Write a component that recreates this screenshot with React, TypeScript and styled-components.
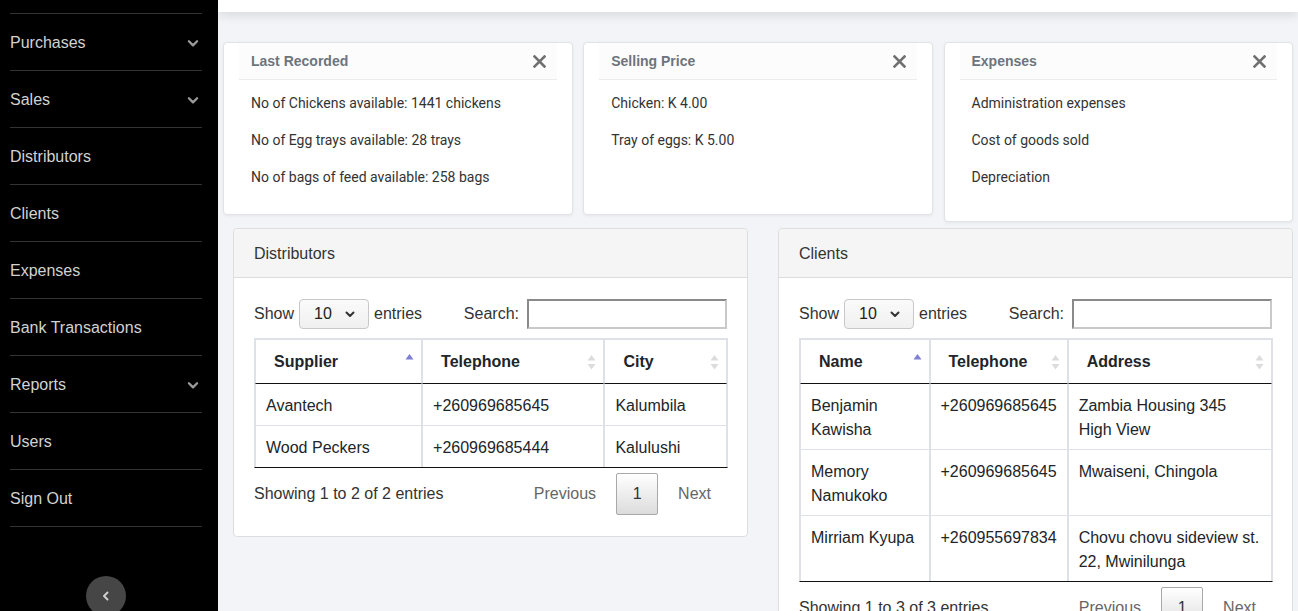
import React from "react";
import styled, { createGlobalStyle } from "styled-components";

const GlobalStyle = createGlobalStyle`
  html, body {
    margin: 0;
    padding: 0;
    height: 100%;
    overflow: hidden;
  }
  body {
    font-family: "Liberation Sans", Arial, sans-serif;
    color: #333;
  }
  * {
    box-sizing: border-box;
  }
`;

const Layout = styled.div`
  display: flex;
  width: 100vw;
  height: 100vh;
  overflow: hidden;
`;

const Sidebar = styled.aside`
  position: relative;
  width: 218px;
  flex-shrink: 0;
  background-color: #000;
  padding: 13px 16px 0 10px;
`;

const Menu = styled.ul`
  list-style: none;
  margin: 0;
  padding: 0;
  border-top: 1px solid #333;
`;

const MenuItem = styled.li`
  display: flex;
  align-items: center;
  justify-content: space-between;
  height: 57px;
  padding: 2px 2px 0 0;
  border-bottom: 1px solid #333;
  color: #d2d2d2;
  font-size: 16px;
`;

const CollapseButton = styled.button`
  position: absolute;
  left: 86px;
  top: 576px;
  width: 40px;
  height: 40px;
  border-radius: 50%;
  border: none;
  background-color: #464646;
  display: flex;
  align-items: center;
  justify-content: center;
  padding: 0;
`;

const Main = styled.main`
  flex: 1;
  background-color: #f3f4f8;
  overflow: hidden;
`;

const TopBar = styled.div`
  height: 12px;
  background-color: #fff;
  box-shadow: 0 3px 12px rgba(0, 0, 0, 0.12);
`;

const CardRow = styled.div`
  display: grid;
  grid-template-columns: repeat(3, 349.5px);
  gap: 10.75px;
  align-items: start;
  margin-top: 30px;
  padding: 0 6px 0 5px;
`;

const Card = styled.div<{ $height: number }>`
  height: ${(p) => p.$height}px;
  background-color: #fff;
  border: 1px solid #e2e3e6;
  border-radius: 4px;
  box-shadow: 0 1px 3px rgba(0, 0, 0, 0.06);
  font-family: Roboto, "Liberation Sans", sans-serif;
`;

const CardHeader = styled.div`
  display: flex;
  align-items: center;
  justify-content: space-between;
  margin: 0 15px;
  height: 37px;
  padding: 0 11px 0 12px;
  background-color: #fcfcfc;
  border-bottom: 1px solid #ececec;
`;

const CardTitle = styled.span`
  font-family: "Liberation Sans", Arial, sans-serif;
  font-size: 14px;
  font-weight: 700;
  color: #6c757d;
`;

const CardBody = styled.div`
  padding: 13px 27px 0;
`;

const CardLine = styled.p`
  margin: 0 0 17px;
  font-size: 14px;
  line-height: 20px;
  color: #333;
`;

const PanelRow = styled.div`
  display: grid;
  grid-template-columns: 515px 515px;
  gap: 30px;
  align-items: start;
  margin-top: 6px;
  padding: 0 5px 0 15px;
`;

const Panel = styled.section`
  background-color: #fff;
  border: 1px solid #ddd;
  border-radius: 4px;
`;

const PanelHeading = styled.div`
  height: 49px;
  padding: 1px 20px 0;
  display: flex;
  align-items: center;
  background-color: #f5f5f5;
  border-bottom: 1px solid #ddd;
  border-radius: 4px 4px 0 0;
  font-size: 16px;
  color: #333;
`;

const PanelBody = styled.div`
  padding: 21px 19px 21px 20px;
`;

const Controls = styled.div`
  display: flex;
  align-items: center;
  justify-content: space-between;
  height: 29px;
  font-size: 16px;
  color: #333;
`;

const Group = styled.label`
  display: flex;
  align-items: center;
  gap: 5px;
`;

const SelectBox = styled.div`
  display: flex;
  align-items: center;
  justify-content: space-between;
  width: 70px;
  height: 30px;
  padding: 0 12px 0 14px;
  border: 1px solid #c8c8c8;
  border-radius: 4px;
  background: linear-gradient(#fafafa, #f0f0f0);
  color: #222;
`;

const SearchInput = styled.input`
  width: 200px;
  height: 30px;
  margin: 0 1px 0 3px;
  border: 2px solid #c9c9c9;
  border-top-color: #8a8a8a;
  border-left-color: #8a8a8a;
  background: #fff;
`;

const Table = styled.table`
  width: 100%;
  margin-top: 10px;
  border-collapse: separate;
  border-spacing: 0;
  border: 1px solid #dee2e6;
  border-bottom: 1px solid #111;
  font-size: 16px;
  color: #212529;
`;

const HeadCell = styled.th<{ $width: number }>`
  position: relative;
  width: ${(p) => p.$width}px;
  height: 45px;
  padding: 0 18px;
  text-align: left;
  font-weight: 700;
  border: 1px solid #dee2e6;
  border-bottom: 1px solid #111;
`;

const SortIcon = styled.span`
  position: absolute;
  right: 7px;
  top: 13px;
  display: flex;
`;

const Cell = styled.td`
  padding: 10px 10px 7px 10px;
  line-height: 24px;
  vertical-align: top;
  border: 1px solid #dee2e6;
  border-bottom: none;
  tr:first-child > & {
    border-top: none;
  }
`;

const Footer = styled.div`
  display: flex;
  align-items: center;
  justify-content: space-between;
  margin-top: 5px;
  font-size: 16px;
  color: #333;
`;

const Pager = styled.div`
  display: flex;
  align-items: center;
  gap: 20px;
  padding-right: 17px;
  color: #666;
`;

const PageButton = styled.span`
  display: flex;
  align-items: center;
  justify-content: center;
  width: 42px;
  height: 42px;
  border: 1px solid #a9a9a9;
  border-radius: 2px;
  background: linear-gradient(#fff, #dcdcdc);
  color: #333;
`;

const Chevron = ({ dir, color, size }: { dir: "down" | "left"; color: string; size: number }) => (
  <svg width={size} height={size} viewBox="0 0 12 12" fill="none">
    <path
      d={dir === "down" ? "M2.5 4.5 L6 8 L9.5 4.5" : "M7.5 2.5 L4 6 L7.5 9.5"}
      stroke={color}
      strokeWidth={2}
      strokeLinecap="round"
      strokeLinejoin="round"
    />
  </svg>
);

const CloseIcon = () => (
  <svg width="13" height="13" viewBox="0 0 13 13">
    <path d="M1.5 1.5 L11.5 11.5 M11.5 1.5 L1.5 11.5" stroke="#707070" strokeWidth={2.6} strokeLinecap="square" />
  </svg>
);

const Sort = ({ active }: { active?: boolean }) => (
  <SortIcon>
    {active ? (
      <svg width="9" height="19" viewBox="0 0 9 19">
        <path d="M0.5 6.5 L4.5 1 L8.5 6.5 Z" fill="#7f7fd5" />
      </svg>
    ) : (
      <svg width="9" height="19" viewBox="0 0 9 19">
        <path d="M0.5 7.5 L4.5 2 L8.5 7.5 Z" fill="#dcdcdc" />
        <path d="M0.5 11 L4.5 16.5 L8.5 11 Z" fill="#dcdcdc" />
      </svg>
    )}
  </SortIcon>
);

const menu = [
  { label: "Purchases", sub: true },
  { label: "Sales", sub: true },
  { label: "Distributors" },
  { label: "Clients" },
  { label: "Expenses" },
  { label: "Bank Transactions" },
  { label: "Reports", sub: true },
  { label: "Users" },
  { label: "Sign Out" },
];

const cards = [
  {
    title: "Last Recorded",
    height: 173,
    lines: [
      "No of Chickens available: 1441 chickens",
      "No of Egg trays available: 28 trays",
      "No of bags of feed available: 258 bags",
    ],
  },
  { title: "Selling Price", height: 173, lines: ["Chicken: K 4.00", "Tray of eggs: K 5.00"] },
  {
    title: "Expenses",
    height: 180,
    lines: ["Administration expenses", "Cost of goods sold", "Depreciation"],
  },
];

type TableSpec = {
  title: string;
  columns: { label: string; width: number }[];
  rows: string[][];
  total: number;
};

const tables: TableSpec[] = [
  {
    title: "Distributors",
    columns: [
      { label: "Supplier", width: 168 },
      { label: "Telephone", width: 183 },
      { label: "City", width: 123 },
    ],
    rows: [
      ["Avantech", "+260969685645", "Kalumbila"],
      ["Wood Peckers", "+260969685444", "Kalulushi"],
    ],
    total: 2,
  },
  {
    title: "Clients",
    columns: [
      { label: "Name", width: 130 },
      { label: "Telephone", width: 138 },
      { label: "Address", width: 206 },
    ],
    rows: [
      ["Benjamin Kawisha", "+260969685645", "Zambia Housing 345 High View"],
      ["Memory Namukoko", "+260969685645", "Mwaiseni, Chingola"],
      ["Mirriam Kyupa", "+260955697834", "Chovu chovu sideview st. 22, Mwinilunga"],
    ],
    total: 3,
  },
];

function DataPanel({ spec }: { spec: TableSpec }) {
  return (
    <Panel>
      <PanelHeading>{spec.title}</PanelHeading>
      <PanelBody>
        <Controls>
          <Group>
            Show
            <SelectBox>
              10
              <Chevron dir="down" color="#333" size={12} />
            </SelectBox>
            entries
          </Group>
          <Group>
            Search:
            <SearchInput type="text" />
          </Group>
        </Controls>
        <Table>
          <thead>
            <tr>
              {spec.columns.map((c, i) => (
                <HeadCell key={c.label} $width={c.width}>
                  {c.label}
                  <Sort active={i === 0} />
                </HeadCell>
              ))}
            </tr>
          </thead>
          <tbody>
            {spec.rows.map((r) => (
              <tr key={r[0]}>
                {r.map((v, i) => (
                  <Cell key={i}>{v}</Cell>
                ))}
              </tr>
            ))}
          </tbody>
        </Table>
        <Footer>
          <span>
            Showing 1 to {spec.total} of {spec.total} entries
          </span>
          <Pager>
            <span>Previous</span>
            <PageButton>1</PageButton>
            <span>Next</span>
          </Pager>
        </Footer>
      </PanelBody>
    </Panel>
  );
}

function App() {
  return (
    <Layout>
      <GlobalStyle />
      <Sidebar>
        <Menu>
          {menu.map((m) => (
            <MenuItem key={m.label}>
              {m.label}
              {m.sub && <Chevron dir="down" color="#9a9a9a" size={14} />}
            </MenuItem>
          ))}
        </Menu>
        <CollapseButton>
          <Chevron dir="left" color="#cfcfcf" size={12} />
        </CollapseButton>
      </Sidebar>
      <Main>
        <TopBar />
        <CardRow>
          {cards.map((c) => (
            <Card key={c.title} $height={c.height}>
              <CardHeader>
                <CardTitle>{c.title}</CardTitle>
                <CloseIcon />
              </CardHeader>
              <CardBody>
                {c.lines.map((l) => (
                  <CardLine key={l}>{l}</CardLine>
                ))}
              </CardBody>
            </Card>
          ))}
        </CardRow>
        <PanelRow>
          {tables.map((t) => (
            <DataPanel key={t.title} spec={t} />
          ))}
        </PanelRow>
      </Main>
    </Layout>
  );
}

export default App;
